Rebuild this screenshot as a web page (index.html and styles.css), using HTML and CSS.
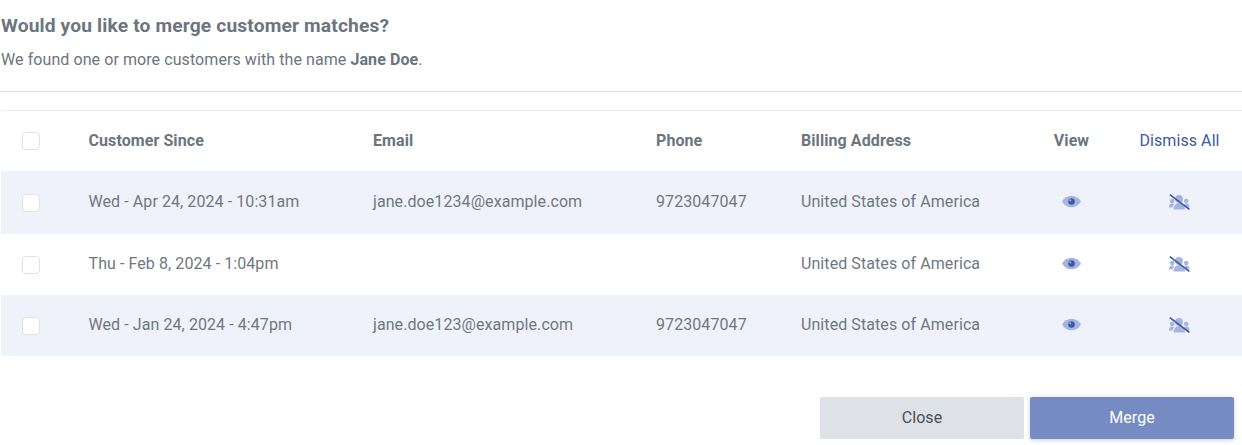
FILE: index.html
```html
<!DOCTYPE html>
<html lang="en">
  <head>
    <meta charset="UTF-8" />
    <title>Merge customers</title>
    <link rel="stylesheet" href="styles.css">
  </head>
  <body>
    <div class="intro">
      <h2>Would you like to merge customer matches?</h2>
      <p>We found one or more customers with the name <strong>Jane Doe</strong>.</p>
    </div>
    <table class="matches">
      <colgroup>
        <col class="c-check" />
        <col class="c-since" />
        <col class="c-email" />
        <col class="c-phone" />
        <col class="c-address" />
        <col class="c-view" />
        <col class="c-dismiss" />
      </colgroup>
      <thead>
        <tr>
          <th><span class="check"></span></th>
          <th>Customer Since</th>
          <th>Email</th>
          <th>Phone</th>
          <th>Billing Address</th>
          <th class="center">View</th>
          <th class="center dismiss"><a href="#">Dismiss All</a></th>
        </tr>
      </thead>
      <tbody>
        <tr class="shaded row-first">
          <td><span class="check"></span></td>
          <td>Wed - Apr 24, 2024 - 10:31am</td>
          <td>jane.doe1234@example.com</td>
          <td>9723047047</td>
          <td>United States of America</td>
          <td class="center"><svg class="icon icon-eye" viewBox="0 0 18 12"><path class="light" d="M0 6C2 2.500 5.200 .5 9 .5s7 2 9 5.500c-2 3.500-5.200 5.500-9 5.500S2 9.500 0 6z"/><circle class="dark" cx="9" cy="6" r="3.100"/><circle class="light" cx="7.800" cy="4.900" r="1"/></svg></td>
          <td class="center dismiss"><svg class="icon icon-people" viewBox="0 0 21 16"><circle class="light" cx="10" cy="5" r="3.900"/><circle class="light" cx="3.200" cy="7" r="2.300"/><circle class="light" cx="17.200" cy="7" r="2.300"/><path class="light" d="M4.500 15.500c0-3.500 2-6.500 5.500-6.500s6 3 6 6.500z"/><path class="light" d="M0 13.500c0-2.500 1-4 3-4 1 0 1.700.3 2.300.8-1 1-1.600 2-1.800 3.200z"/><path class="light" d="M20.500 13.500c0-2.500-1-4-3-4-1 0-1.700.3-2.300.8 1 1 1.600 2 1.800 3.200z"/><path class="slash" d="M.8 .6L20.400 15.400"/></svg></td>
        </tr>
        <tr>
          <td><span class="check"></span></td>
          <td>Thu - Feb 8, 2024 - 1:04pm</td>
          <td></td>
          <td></td>
          <td>United States of America</td>
          <td class="center"><svg class="icon icon-eye" viewBox="0 0 18 12"><path class="light" d="M0 6C2 2.500 5.200 .5 9 .5s7 2 9 5.500c-2 3.500-5.200 5.500-9 5.500S2 9.500 0 6z"/><circle class="dark" cx="9" cy="6" r="3.100"/><circle class="light" cx="7.800" cy="4.900" r="1"/></svg></td>
          <td class="center dismiss"><svg class="icon icon-people" viewBox="0 0 21 16"><circle class="light" cx="10" cy="5" r="3.900"/><circle class="light" cx="3.200" cy="7" r="2.300"/><circle class="light" cx="17.200" cy="7" r="2.300"/><path class="light" d="M4.500 15.500c0-3.500 2-6.500 5.500-6.500s6 3 6 6.500z"/><path class="light" d="M0 13.500c0-2.500 1-4 3-4 1 0 1.700.3 2.300.8-1 1-1.600 2-1.800 3.200z"/><path class="light" d="M20.500 13.500c0-2.500-1-4-3-4-1 0-1.700.3-2.300.8 1 1 1.600 2 1.800 3.200z"/><path class="slash" d="M.8 .6L20.400 15.400"/></svg></td>
        </tr>
        <tr class="shaded">
          <td><span class="check"></span></td>
          <td>Wed - Jan 24, 2024 - 4:47pm</td>
          <td>jane.doe123@example.com</td>
          <td>9723047047</td>
          <td>United States of America</td>
          <td class="center"><svg class="icon icon-eye" viewBox="0 0 18 12"><path class="light" d="M0 6C2 2.500 5.200 .5 9 .5s7 2 9 5.500c-2 3.500-5.200 5.500-9 5.500S2 9.500 0 6z"/><circle class="dark" cx="9" cy="6" r="3.100"/><circle class="light" cx="7.800" cy="4.900" r="1"/></svg></td>
          <td class="center dismiss"><svg class="icon icon-people" viewBox="0 0 21 16"><circle class="light" cx="10" cy="5" r="3.900"/><circle class="light" cx="3.200" cy="7" r="2.300"/><circle class="light" cx="17.200" cy="7" r="2.300"/><path class="light" d="M4.500 15.500c0-3.500 2-6.500 5.500-6.500s6 3 6 6.500z"/><path class="light" d="M0 13.500c0-2.500 1-4 3-4 1 0 1.700.3 2.300.8-1 1-1.600 2-1.800 3.200z"/><path class="light" d="M20.500 13.500c0-2.500-1-4-3-4-1 0-1.700.3-2.300.8 1 1 1.600 2 1.800 3.200z"/><path class="slash" d="M.8 .6L20.400 15.400"/></svg></td>
        </tr>
      </tbody>
    </table>
    <div class="actions">
      <button class="btn btn-close">Close</button>
      <button class="btn btn-merge">Merge</button>
    </div>
  </body>
</html>
```

FILE: styles.css
```css
html,
body {
  height: 445px;
  overflow: hidden;
}
body {
  font-family: Roboto, sans-serif;
  font-size: 16px;
  letter-spacing: 0.08px;
  color: #6c757d;
  margin: 0;
  padding: 0;
  background-color: #fff;
}
.intro {
  padding: 15px 1px 0;
  box-sizing: border-box;
  border-bottom: 1px solid #dee2e6;
  height: 92px;
}
.intro h2 {
  margin: 0;
  font-size: 19.200px;
  letter-spacing: 0.15px;
  line-height: 22px;
  font-weight: 700;
}
.intro p {
  margin: 12px 0 0;
  line-height: 22px;
}
.matches {
  width: 1241px;
  margin: 18px 0 0 1px;
  border-collapse: collapse;
  table-layout: fixed;
  border-top: 1px solid #e9ecef;
}
.c-check {
  width: 87.500px;
}
.c-since {
  width: 284.500px;
}
.c-email {
  width: 283px;
}
.c-phone {
  width: 145px;
}
.c-address {
  width: 231px;
}
.c-view {
  width: 79px;
}
th,
td {
  padding: 0 0 2px;
  text-align: left;
}
th {
  height: 58px;
  font-weight: 700;
}
td {
  height: 59px;
  font-weight: 400;
  color: #70787f;
}
.row-first td {
  height: 61px;
}
.shaded {
  background-color: #eff2fa;
}
th.center,
td.center {
  text-align: center;
}
th.dismiss,
td.dismiss {
  padding-left: 6px;
}
a {
  color: #3d57a8;
  font-weight: 400;
  text-decoration: none;
}
.check {
  display: block;
  width: 18px;
  height: 18px;
  margin: 2px 0 0 21px;
  box-sizing: border-box;
  background: #fff;
  border: 1px solid #dee2e6;
  border-radius: 4px;
}
.icon {
  display: block;
  margin: 0 auto;
}
.icon-eye {
  width: 19px;
  height: 13px;
}
.icon-people {
  width: 21px;
  height: 16px;
}
.light {
  fill: #a6b5dd;
}
.dark {
  fill: #3d57a8;
}
.slash {
  stroke: #3d57a8;
  stroke-width: 1.600;
  fill: none;
}
.actions {
  display: flex;
  justify-content: flex-end;
  gap: 6px;
  margin-top: 41px;
  padding-right: 8px;
}
.btn {
  width: 204px;
  height: 42px;
  padding: 0 0 2px;
  border: none;
  border-radius: 2px;
  font-family: Roboto, sans-serif;
  font-size: 16px;
  letter-spacing: 0.08px;
  cursor: pointer;
}
.btn-close {
  background-color: #dee1e6;
  color: #495057;
}
.btn-merge {
  background-color: #768ac4;
  color: #fff;
  box-shadow: 0 1px 4px rgba(61, 87, 168, 0.3);
}
```
